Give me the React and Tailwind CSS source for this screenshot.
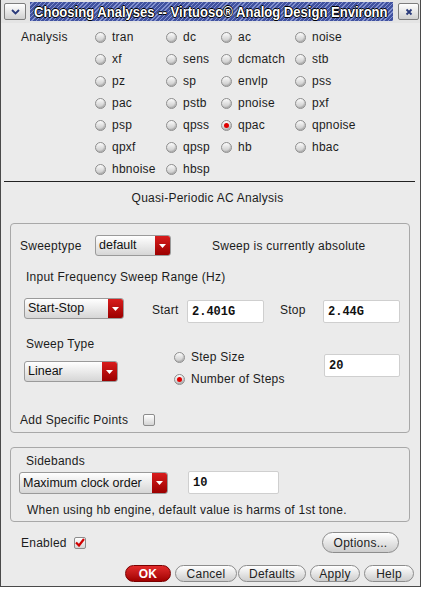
import React from 'react';

const Radio = ({ checked, label }) => (
  <div className="flex items-center gap-[6px] h-[22px]">
    <span className="w-[11px] h-[11px] rounded-full border border-[#8e8e8e] bg-linear-to-b from-[#fbfbfb] to-[#c6c6c6] flex items-center justify-center shadow-[inset_-1px_-1px_1px_rgba(0,0,0,0.15)]">
      {checked && <span className="w-[5px] h-[5px] rounded-full bg-[#e00000]" />}
    </span>
    <span className="leading-[14px]">{label}</span>
  </div>
);

const Dropdown = ({ label, className }) => (
  <div className={`flex rounded-[3px] border border-[#9a9a9a] bg-linear-to-b from-white to-[#d6d6d6] overflow-hidden ${className}`}>
    <span className="flex-1 pl-[3px] flex items-center text-[12.5px] tracking-normal text-[#111]">{label}</span>
    <span className="w-[15px] bg-linear-to-b from-[#d81c1c] to-[#9c0000] flex items-center justify-center">
      <svg width="7" height="4" viewBox="0 0 7 4">
        <polygon points="0,0 7,0 3.5,4" fill="#fff" />
      </svg>
    </span>
  </div>
);

const Field = ({ value, className }) => (
  <div className={`bg-white border border-[#cfcfcf] rounded-[2px] flex items-center pl-[4px] font-['Liberation_Mono',monospace] font-bold text-[12px] tracking-normal text-[#111] ${className}`}>
    {value}
  </div>
);

const Checkbox = ({ checked }) => (
  <span className="w-[12px] h-[12px] rounded-[2px] border border-[#8c8c8c] bg-linear-to-b from-white to-[#d4d4d4] flex items-center justify-center">
    {checked && (
      <svg width="10" height="9" viewBox="0 0 10 9">
        <path d="M1 4.5 L4 7.5 L9 1" stroke="#d00000" strokeWidth="2.2" fill="none" />
      </svg>
    )}
  </span>
);

const Button = ({ label, className, primary }) => (
  <div
    className={`flex items-center justify-center rounded-full border text-[12px] ${
      primary
        ? 'border-[#7a0000] bg-linear-to-b from-[#e32a2a] to-[#a10000] text-white font-bold'
        : 'border-[#8c8c8c] bg-linear-to-b from-white to-[#cdcdcd] text-[#222]'
    } ${className}`}
  >
    {label}
  </div>
);

const analyses = [
  ['tran', 'dc', 'ac', 'noise'],
  ['xf', 'sens', 'dcmatch', 'stb'],
  ['pz', 'sp', 'envlp', 'pss'],
  ['pac', 'pstb', 'pnoise', 'pxf'],
  ['psp', 'qpss', 'qpac', 'qpnoise'],
  ['qpxf', 'qpsp', 'hb', 'hbac'],
  ['hbnoise', 'hbsp'],
];

export default function App() {
  return (
    <div className="w-[423px] h-[593px] bg-white overflow-hidden font-['Liberation_Sans',Arial,sans-serif] text-[12px] tracking-[0.25px] text-[#1c1c1c]">
      <div className="w-[421px] h-[587px] border-l border-r border-b border-[#4a4a4a] bg-[#ebebeb] flex flex-col">
        {/* Title bar */}
        <div className="h-[23px] flex items-center bg-[#e4e4e4]">
          <div className="ml-[3px] w-[22px] h-[17px] rounded-[2px] border border-[#7d7d7d] bg-linear-to-b from-white to-[#d0d0d0] flex items-center justify-center">
            <svg width="9" height="6" viewBox="0 0 9 6">
              <path d="M1 1 L4.5 4.5 L8 1" stroke="#2a3a7a" strokeWidth="1.8" fill="none" />
            </svg>
          </div>
          <div className="ml-[4px] w-[363px] h-[19px] overflow-hidden bg-[repeating-linear-gradient(135deg,#41529f_0px,#41529f_2px,#8391cf_2px,#8391cf_3px)] flex items-center">
            <span className="ml-[4px] whitespace-nowrap origin-left scale-x-[0.87] tracking-normal text-white font-bold text-[15px] leading-[19px] [text-shadow:1px_0_0_#000,-1px_0_0_#000,0_1px_0_#000,0_-1px_0_#000]">
              Choosing Analyses -- Virtuoso® Analog Design Environn
            </span>
          </div>
          <div className="ml-[5px] w-[21px] h-[17px] rounded-[2px] border border-[#7d7d7d] bg-linear-to-b from-white to-[#d0d0d0] flex items-center justify-center">
            <svg width="8" height="8" viewBox="0 0 8 8">
              <path d="M1.5 1.5 L6.5 6.5 M6.5 1.5 L1.5 6.5" stroke="#2a3a7a" strokeWidth="1.8" />
            </svg>
          </div>
        </div>

        {/* Analysis selector */}
        <div className="flex pt-[3px]">
          <div className="w-[94px] pl-[20px] h-[22px] flex items-center">Analysis</div>
          <div className="grid grid-cols-[71px_55px_74px_1fr]">
            {analyses.flatMap((row, r) =>
              row.map((name) => <Radio key={`${r}-${name}`} label={name} checked={name === 'qpac'} />)
            )}
          </div>
        </div>

        <div className="mt-[1px] ml-[3px] mr-[5px] border-t border-[#222]" />

        <div className="mt-[9px] leading-[14px] text-center pr-[6px]">Quasi-Periodic AC Analysis</div>

        {/* Sweep group */}
        <div className="mt-[18px] ml-[9px] w-[400px] h-[210px] border border-[#a8a8a8] rounded-[4px] flex flex-col">
          <div className="mt-[11px] h-[21px] flex items-center pl-[9px]">
            <span className="w-[75px]">Sweeptype</span>
            <Dropdown label="default" className="w-[76px] h-[21px]" />
            <span className="ml-[41px]">Sweep is currently absolute</span>
          </div>

          <div className="mt-[14px] leading-[14px] pl-[15px]">Input Frequency Sweep Range (Hz)</div>

          <div className="mt-[14px] flex items-start pl-[13px]">
            <Dropdown label="Start-Stop" className="w-[100px] h-[21px]" />
            <span className="ml-[28px] w-[35px] mt-[5px] leading-[14px]">Start</span>
            <Field value="2.401G" className="w-[77px] h-[23px] mt-[2px]" />
            <span className="ml-[16px] w-[43px] mt-[5px] leading-[14px]">Stop</span>
            <Field value="2.44G" className="w-[77px] h-[23px] mt-[2px]" />
          </div>

          <div className="mt-[14px] flex h-[53px]">
            <div className="ml-[13px] w-[94px] flex flex-col">
              <span className="pl-[2px] leading-[14px]">Sweep Type</span>
              <Dropdown label="Linear" className="mt-[10px] w-[94px] h-[21px]" />
            </div>
            <div className="ml-[56px] w-[150px] mt-[9px] flex flex-col">
              <Radio label="Step Size" />
              <Radio label="Number of Steps" checked />
            </div>
            <Field value="20" className="mt-[17px] w-[76px] h-[23px]" />
          </div>

          <div className="mt-[23px] h-[14px] flex items-center pl-[9px]">
            <span className="w-[123px]">Add Specific Points</span>
            <Checkbox />
          </div>
        </div>

        {/* Sidebands group */}
        <div className="mt-[14px] ml-[9px] w-[400px] h-[75px] border border-[#a8a8a8] rounded-[4px] flex flex-col">
          <div className="mt-[6px] leading-[14px] pl-[15px]">Sidebands</div>
          <div className="mt-[4px] flex items-start pl-[8px]">
            <Dropdown label="Maximum clock order" className="w-[149px] h-[22px]" />
            <Field value="10" className="ml-[20px] w-[91px] h-[23px] -mt-[1px]" />
          </div>
          <div className="mt-[9px] leading-[14px] pl-[16px]">
            When using hb engine, default value is harms of 1st tone.
          </div>
        </div>

        <div className="mt-[10px] h-[21px] flex items-center pl-[20px] pr-[21px]">
          <span className="w-[53px]">Enabled</span>
          <Checkbox checked />
          <Button label="Options..." className="ml-auto w-[77px] h-[21px]" />
        </div>

        <div className="mt-[12px] flex justify-end pr-[6px]">
          <Button label="OK" primary className="w-[46px] h-[17px]" />
          <Button label="Cancel" className="ml-[4px] w-[62px] h-[17px]" />
          <Button label="Defaults" className="ml-[1px] w-[68px] h-[17px]" />
          <Button label="Apply" className="ml-[4px] w-[50px] h-[17px]" />
          <Button label="Help" className="ml-[4px] w-[50px] h-[17px]" />
        </div>
      </div>
    </div>
  );
}
